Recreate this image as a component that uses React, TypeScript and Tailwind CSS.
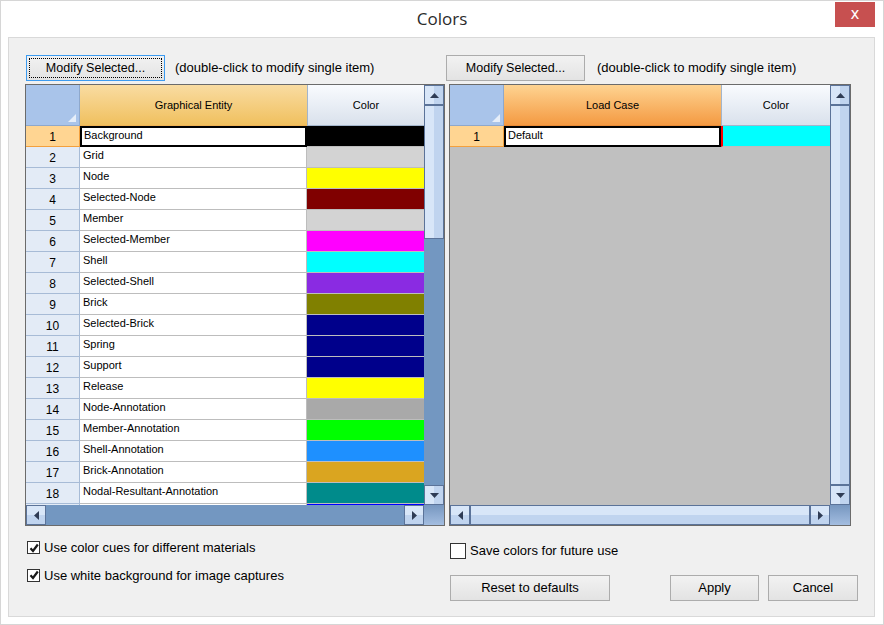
import React from "react";

type Dir = "up" | "down" | "left" | "right";

const rows: [string, string][] = [
  ["Background", "#000000"],
  ["Grid", "#d3d3d3"],
  ["Node", "#ffff00"],
  ["Selected-Node", "#800000"],
  ["Member", "#d3d3d3"],
  ["Selected-Member", "#ff00ff"],
  ["Shell", "#00ffff"],
  ["Selected-Shell", "#8a2be2"],
  ["Brick", "#808000"],
  ["Selected-Brick", "#00008b"],
  ["Spring", "#00008b"],
  ["Support", "#00008b"],
  ["Release", "#ffff00"],
  ["Node-Annotation", "#a9a9a9"],
  ["Member-Annotation", "#00ff00"],
  ["Shell-Annotation", "#1e90ff"],
  ["Brick-Annotation", "#daa520"],
  ["Nodal-Resultant-Annotation", "#008b8b"],
];

const Arrow = ({ dir }: { dir: Dir }) => {
  const vertical = dir === "up" || dir === "down";
  const w = vertical ? 9 : 5;
  const h = vertical ? 5 : 9;
  const pts = {
    up: "0,5 4.5,0 9,5",
    down: "0,0 9,0 4.5,5",
    left: "5,0 5,9 0,4.5",
    right: "0,0 5,4.5 0,9",
  }[dir];
  return (
    <svg width={w} height={h} viewBox={`0 0 ${w} ${h}`}>
      <polygon points={pts} fill="#2f3c55" />
    </svg>
  );
};

const vPiece = "border border-[#5b7399] bg-[linear-gradient(to_right,#d8e6f8_50%,#c0d4ef_50%)]";
const hPiece = "border border-[#5b7399] bg-[linear-gradient(to_bottom,#d8e6f8_50%,#c0d4ef_50%)]";

const ScrollBtn = ({ dir }: { dir: Dir }) => {
  const vertical = dir === "up" || dir === "down";
  return (
    <div
      className={`flex shrink-0 items-center justify-center ${
        vertical ? `h-[20px] w-full ${vPiece}` : `h-full w-[20px] ${hPiece}`
      }`}
    >
      <Arrow dir={dir} />
    </div>
  );
};

const VScroll = ({ thumb }: { thumb?: number }) => (
  <div className="flex w-[20px] shrink-0 flex-col bg-[#7397c1]">
    <ScrollBtn dir="up" />
    {thumb ? (
      <>
        <div className={`w-full ${vPiece}`} style={{ height: thumb }} />
        <div className="flex-1" />
      </>
    ) : (
      <div className={`w-full flex-1 ${vPiece}`} />
    )}
    <ScrollBtn dir="down" />
  </div>
);

const HScroll = ({ full }: { full?: boolean }) => (
  <div className="flex h-[20px] shrink-0">
    <div className="flex flex-1 bg-[#7397c1]">
      <ScrollBtn dir="left" />
      {full ? <div className={`h-full flex-1 ${hPiece}`} /> : <div className="flex-1" />}
      <ScrollBtn dir="right" />
    </div>
    <div className="w-[20px] bg-[linear-gradient(to_bottom,#7797c0,#a3bde0)]" />
  </div>
);

const Corner = () => (
  <div className="relative h-[41px] w-[54px] shrink-0 border-r border-b border-[#8ea8cc] bg-[#a9c4ea]">
    <svg className="absolute right-[3px] bottom-[3px]" width="8" height="8" viewBox="0 0 8 8">
      <polygon points="8,0 8,8 0,8" fill="#e6eef9" />
    </svg>
  </div>
);

const ColorHeader = ({ width }: { width: string }) => (
  <div
    className={`flex h-[41px] ${width} shrink-0 items-center justify-center border-b border-l border-[#a3b5cb] bg-[linear-gradient(to_bottom,#f9fbfe,#d9e1ec)]`}
  >
    Color
  </div>
);

const RowHead = ({ n, selected }: { n?: number; selected?: boolean }) => (
  <div
    className={`flex h-full w-[54px] shrink-0 items-center justify-center pt-[2px] text-[12px] ${
      selected
        ? "border-r border-b border-[#f3a03d] bg-[#ffd592]"
        : "border-r border-b border-[#a7bbd6] bg-[#e3ebf6]"
    }`}
  >
    {n}
  </div>
);

const EntityGrid = () => (
  <div className="flex h-[442px] w-[420px] flex-col border border-[#6b6b6b]">
    <div className="flex h-[420px]">
      <div className="flex w-[398px] flex-col overflow-hidden">
        <div className="flex shrink-0">
          <Corner />
          <div className="flex h-[41px] w-[227px] shrink-0 items-center justify-center border-b border-[#efb253] bg-[linear-gradient(to_bottom,#f9dca2,#f0c05e)]">
            Graphical Entity
          </div>
          <ColorHeader width="w-[117px]" />
        </div>
        {rows.map(([name, color], i) => (
          <div key={name} className="flex h-[21px] shrink-0">
            <RowHead n={i + 1} selected={i === 0} />
            {i === 0 ? (
              <div className="h-full w-[227px] shrink-0 border-2 border-black bg-white pl-[2px] leading-[15px]">
                {name}
              </div>
            ) : (
              <div className="h-full w-[227px] shrink-0 border-r border-b border-[#bdbdbd] bg-white pt-[1px] pl-[3px] leading-[15px]">
                {name}
              </div>
            )}
            <div className="h-full w-[117px] shrink-0 border-b border-[#bdbdbd]" style={{ backgroundColor: color }} />
          </div>
        ))}
        {/* next row, only its top edge shows */}
        <div className="flex h-[21px] shrink-0">
          <RowHead />
          <div className="h-full w-[227px] shrink-0 border-r border-[#bdbdbd] bg-white" />
          <div className="h-full w-[117px] shrink-0 bg-[#0000ff]" />
        </div>
      </div>
      <VScroll thumb={134} />
    </div>
    <HScroll />
  </div>
);

const LoadCaseGrid = () => (
  <div className="flex h-[442px] w-[402px] flex-col border border-[#6b6b6b]">
    <div className="flex h-[420px]">
      <div className="flex w-[380px] flex-col bg-[#c0c0c0]">
        <div className="flex shrink-0">
          <Corner />
          <div className="flex h-[41px] w-[217px] shrink-0 items-center justify-center border-b border-[#e98a35] bg-[linear-gradient(to_bottom,#fed391,#f49a42)]">
            Load Case
          </div>
          <ColorHeader width="w-[109px]" />
        </div>
        <div className="flex h-[21px] shrink-0">
          <RowHead n={1} selected />
          <div className="h-full w-[217px] shrink-0 border-2 border-black bg-white pl-[2px] leading-[15px]">
            Default
          </div>
          <div className="h-full w-[109px] shrink-0 border-b border-l-2 border-b-[#bdbdbd] border-l-[#ff0000] bg-[#00ffff]" />
        </div>
      </div>
      <VScroll />
    </div>
    <HScroll full />
  </div>
);

const Button = ({ label, width, focused }: { label: string; width: string; focused?: boolean }) => (
  <div
    className={`flex h-[26px] ${width} shrink-0 items-center justify-center border bg-[linear-gradient(to_bottom,#f2f2f2,#e3e3e3)] p-[2px] ${
      focused ? "border-[#3c9bf0]" : "border-[#acacac]"
    }`}
  >
    <div
      className={`flex h-full w-full items-center justify-center ${
        focused ? "border border-dotted border-black" : ""
      }`}
    >
      {label}
    </div>
  </div>
);

const Check = ({ checked, size }: { checked?: boolean; size: string }) => (
  <div className={`flex ${size} shrink-0 items-center justify-center border border-[#333333] bg-white`}>
    {checked && (
      <svg width="10" height="10" viewBox="0 0 10 10">
        <path d="M1.5 5.2 L4 8 L8.8 1.5" fill="none" stroke="#1a1a1a" strokeWidth="2.2" />
      </svg>
    )}
  </div>
);

export default function App() {
  return (
    <div className="flex h-[625px] w-[884px] flex-col border border-[#d6d6d6] bg-white font-['Liberation_Sans',Arial,sans-serif] text-[11px] text-black">
      <div className="relative flex h-[36px] shrink-0 items-center justify-center">
        <span className="font-['Open_Sans',sans-serif] text-[17px] text-[#2a2a2a]">Colors</span>
        <div className="absolute top-[1px] right-[8px] flex h-[25px] w-[40px] items-center justify-center bg-[#c75050] font-['DejaVu_Sans',sans-serif] text-[15px] text-white">
          x
        </div>
      </div>
      <div className="ml-[7px] flex h-[580px] w-[867px] flex-col border border-[#d9d9d9] bg-[#f0f0f0]">
        <div className="mt-[17px] flex h-[26px] items-center text-[12.5px]">
          <div className="ml-[17px] flex w-[420px] items-center">
            <Button label="Modify Selected..." width="w-[139px]" focused />
            <span className="ml-[10px] text-[13px]">(double-click to modify single item)</span>
          </div>
          <Button label="Modify Selected..." width="w-[139px]" />
          <span className="ml-[12px] text-[13px]">(double-click to modify single item)</span>
        </div>
        <div className="mt-[3px] ml-[16px] flex gap-[4px]">
          <EntityGrid />
          <LoadCaseGrid />
        </div>
        <div className="ml-[18px] flex text-[13px]">
          <div className="flex w-[423px] flex-col">
            <label className="mt-[12px] flex items-center gap-[4px]">
              <Check checked size="h-[13px] w-[13px]" />
              <span>Use color cues for different materials</span>
            </label>
            <label className="mt-[8px] flex items-center gap-[4px]">
              <Check checked size="h-[13px] w-[13px]" />
              <span>Use white background for image captures</span>
            </label>
          </div>
          <div className="flex flex-col">
            <label className="mt-[15px] flex items-center gap-[4px]">
              <Check size="h-[16px] w-[16px]" />
              <span>Save colors for future use</span>
            </label>
            <div className="mt-[14px] flex">
              <Button label="Reset to defaults" width="w-[160px]" />
              <div className="ml-[60px] flex gap-[9px]">
                <Button label="Apply" width="w-[89px]" />
                <Button label="Cancel" width="w-[90px]" />
              </div>
            </div>
          </div>
        </div>
      </div>
    </div>
  );
}
